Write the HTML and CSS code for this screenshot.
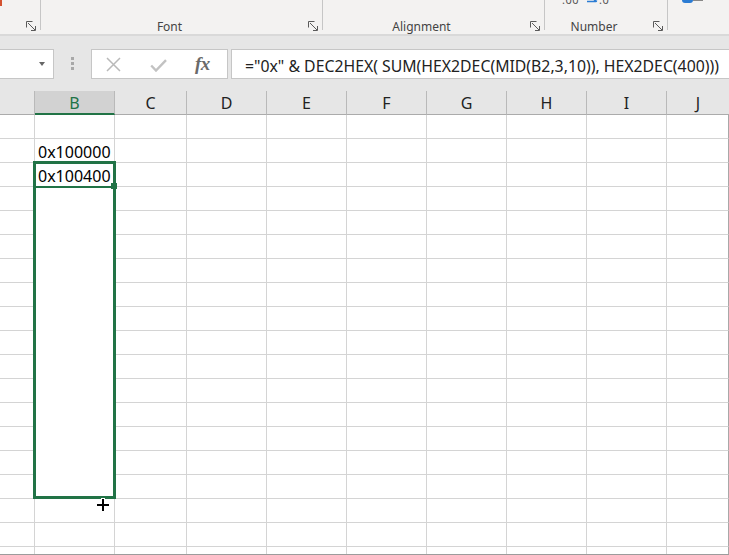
FILE: index.html
```html
<!DOCTYPE html>
<html>
<head>
<meta charset="utf-8">
<link rel="stylesheet" href="styles.css">
</head>
<body>
<div class="ribbon">
  <div class="group g0">
    <div class="gtop"><span class="orange"></span></div>
    <div class="gbot"><span class="label"></span>
      <svg class="launch" viewBox="0 0 10 10"><path d="M0.5 6.5V0.5H6.5M2 2L9 9M5 9.5H9.5V5" fill="none" stroke="#5a5a5a" stroke-width="1"/></svg>
    </div>
  </div>
  <div class="sep"></div>
  <div class="group g1">
    <div class="gtop"></div>
    <div class="gbot"><span class="label">Font</span>
      <svg class="launch" viewBox="0 0 10 10"><path d="M0.5 6.5V0.5H6.5M2 2L9 9M5 9.5H9.5V5" fill="none" stroke="#5a5a5a" stroke-width="1"/></svg>
    </div>
  </div>
  <div class="sep"></div>
  <div class="group g2">
    <div class="gtop"></div>
    <div class="gbot"><span class="label">Alignment</span>
      <svg class="launch" viewBox="0 0 10 10"><path d="M0.5 6.5V0.5H6.5M2 2L9 9M5 9.5H9.5V5" fill="none" stroke="#5a5a5a" stroke-width="1"/></svg>
    </div>
  </div>
  <div class="sep"></div>
  <div class="group g3">
    <div class="gtop numtop">
      <span class="dec">.00</span>
      <svg class="blarrow" viewBox="0 0 11 4"><path d="M0 1.5H9M7 0L10 1.5" fill="none" stroke="#2b7cd3" stroke-width="1.6"/></svg>
      <span class="dec">.0</span>
    </div>
    <div class="gbot"><span class="label">Number</span>
      <svg class="launch" viewBox="0 0 10 10"><path d="M0.5 6.5V0.5H6.5M2 2L9 9M5 9.5H9.5V5" fill="none" stroke="#5a5a5a" stroke-width="1"/></svg>
    </div>
  </div>
  <div class="sep"></div>
  <div class="group g4">
    <div class="gtop"><span class="blueblob"></span><span class="grayblob"></span></div>
  </div>
</div>

<div class="fbar">
  <div class="namebox"><span class="tri"></span></div>
  <div class="grip"><i></i><i></i><i></i></div>
  <div class="fbtns">
    <svg class="xic" viewBox="0 0 15 15"><path d="M1 1L14 14M14 1L1 14" fill="none" stroke="#b9b9b9" stroke-width="1.5"/></svg>
    <svg class="chk" viewBox="0 0 17 13"><path d="M1.2 6.5L6 11.5L16 1.2" fill="none" stroke="#c2c2c2" stroke-width="2.4"/></svg>
    <span class="fx">fx</span>
  </div>
  <div class="finput">="0x" &amp; DEC2HEX( SUM(HEX2DEC(MID(B2,3,10)), HEX2DEC(400)))</div>
</div>

<div class="hdr">
  <div class="h"></div><div class="h on">B</div><div class="h">C</div><div class="h">D</div><div class="h">E</div><div class="h">F</div><div class="h">G</div><div class="h">H</div><div class="h">I</div><div class="h last">J</div>
</div>

<div class="sheet">
  <div class="grid">
    <div class="c"></div><div class="c"></div><div class="c"></div><div class="c"></div><div class="c"></div><div class="c"></div><div class="c"></div><div class="c"></div><div class="c"></div><div class="c"></div>
    <div class="c"></div><div class="c">0x100000</div><div class="c"></div><div class="c"></div><div class="c"></div><div class="c"></div><div class="c"></div><div class="c"></div><div class="c"></div><div class="c"></div>
    <div class="c"></div><div class="c">0x100400</div><div class="c"></div><div class="c"></div><div class="c"></div><div class="c"></div><div class="c"></div><div class="c"></div><div class="c"></div><div class="c"></div>
    <div class="c"></div><div class="c in"></div><div class="c"></div><div class="c"></div><div class="c"></div><div class="c"></div><div class="c"></div><div class="c"></div><div class="c"></div><div class="c"></div>
    <div class="c"></div><div class="c in"></div><div class="c"></div><div class="c"></div><div class="c"></div><div class="c"></div><div class="c"></div><div class="c"></div><div class="c"></div><div class="c"></div>
    <div class="c"></div><div class="c in"></div><div class="c"></div><div class="c"></div><div class="c"></div><div class="c"></div><div class="c"></div><div class="c"></div><div class="c"></div><div class="c"></div>
    <div class="c"></div><div class="c in"></div><div class="c"></div><div class="c"></div><div class="c"></div><div class="c"></div><div class="c"></div><div class="c"></div><div class="c"></div><div class="c"></div>
    <div class="c"></div><div class="c in"></div><div class="c"></div><div class="c"></div><div class="c"></div><div class="c"></div><div class="c"></div><div class="c"></div><div class="c"></div><div class="c"></div>
    <div class="c"></div><div class="c in"></div><div class="c"></div><div class="c"></div><div class="c"></div><div class="c"></div><div class="c"></div><div class="c"></div><div class="c"></div><div class="c"></div>
    <div class="c"></div><div class="c in"></div><div class="c"></div><div class="c"></div><div class="c"></div><div class="c"></div><div class="c"></div><div class="c"></div><div class="c"></div><div class="c"></div>
    <div class="c"></div><div class="c in"></div><div class="c"></div><div class="c"></div><div class="c"></div><div class="c"></div><div class="c"></div><div class="c"></div><div class="c"></div><div class="c"></div>
    <div class="c"></div><div class="c in"></div><div class="c"></div><div class="c"></div><div class="c"></div><div class="c"></div><div class="c"></div><div class="c"></div><div class="c"></div><div class="c"></div>
    <div class="c"></div><div class="c in"></div><div class="c"></div><div class="c"></div><div class="c"></div><div class="c"></div><div class="c"></div><div class="c"></div><div class="c"></div><div class="c"></div>
    <div class="c"></div><div class="c in"></div><div class="c"></div><div class="c"></div><div class="c"></div><div class="c"></div><div class="c"></div><div class="c"></div><div class="c"></div><div class="c"></div>
    <div class="c"></div><div class="c in"></div><div class="c"></div><div class="c"></div><div class="c"></div><div class="c"></div><div class="c"></div><div class="c"></div><div class="c"></div><div class="c"></div>
    <div class="c"></div><div class="c"></div><div class="c"></div><div class="c"></div><div class="c"></div><div class="c"></div><div class="c"></div><div class="c"></div><div class="c"></div><div class="c"></div>
    <div class="c"></div><div class="c"></div><div class="c"></div><div class="c"></div><div class="c"></div><div class="c"></div><div class="c"></div><div class="c"></div><div class="c"></div><div class="c"></div>
    <div class="c"></div><div class="c"></div><div class="c"></div><div class="c"></div><div class="c"></div><div class="c"></div><div class="c"></div><div class="c"></div><div class="c"></div><div class="c"></div>
    <div class="c"></div><div class="c"></div><div class="c"></div><div class="c"></div><div class="c"></div><div class="c"></div><div class="c"></div><div class="c"></div><div class="c"></div><div class="c"></div>
  </div>
  <div class="range"></div>
  <div class="actline"></div>
  <div class="fillhandle"></div>
  <svg class="cursor" viewBox="0 0 16 16"><path d="M8 1V15M1 8H15" stroke="#fff" stroke-width="4"/><path d="M8 2V14M2 8H14" stroke="#000" stroke-width="2"/></svg>
</div>
</body>
</html>
```

FILE: styles.css
```css
* { box-sizing: border-box; }
html, body { margin: 0; padding: 0; }
body {
  width: 729px;
  height: 555px;
  overflow: hidden;
  background: #e6e6e6;
  font-family: "Noto Sans", "Open Sans", sans-serif;
  color: #222;
}

/* Ribbon */
.ribbon {
  display: flex;
  height: 36px;
  background: #f3f2f1;
  border-bottom: 2px solid #d9d9d9;
}
.group {
  display: flex;
  flex-direction: column;
  justify-content: space-between;
  height: 34px;
  overflow: hidden;
  flex: none;
}
.g0 { width: 40px; }
.g1 { width: 281px; }
.g2 { width: 221px; }
.g3 { width: 122px; }
.g4 { flex: 1; }
.sep { width: 1px; height: 30px; background: #c6c6c6; flex: none; }
.gtop { height: 8px; display: flex; align-items: flex-start; }
.gbot { display: flex; align-items: flex-end; }
.label {
  flex: 1;
  text-align: center;
  padding-right: 10px;
  font-size: 12px;
  line-height: 14px;
  color: #444;
  white-space: nowrap;
}
.launch { width: 10px; height: 10px; margin: 0 4px 3px 0; flex: none; display: block; }
.orange { width: 2px; height: 6px; background: #d35230; display: block; }
.numtop { padding-left: 17px; }
.dec {
  font-size: 11px;
  line-height: 10px;
  margin-top: -5px;
  color: #555;
  letter-spacing: 0.5px;
}
.blarrow { width: 11px; height: 4px; margin-left: 8px; margin-right: 1px; display: block; }
.blueblob { width: 11px; height: 3px; margin-left: 14px; background: #2b7cd3; border-radius: 0 0 3px 3px; display: block; }
.grayblob { width: 10px; height: 1px; background: #888; display: block; margin-top: 0; }

/* Formula bar */
.fbar {
  display: flex;
  align-items: flex-start;
  height: 55px;
  padding-top: 13px;
}
.namebox {
  margin-left: -1px;
  width: 55px;
  height: 30px;
  background: #fff;
  border: 1px solid #c6c6c6;
  display: flex;
  align-items: center;
  justify-content: flex-end;
  padding-right: 8px;
  flex: none;
}
.tri {
  width: 0; height: 0;
  border-left: 3.5px solid transparent;
  border-right: 3.5px solid transparent;
  border-top: 4px solid #666;
}
.grip {
  display: flex;
  flex-direction: column;
  gap: 2px;
  margin: 8px 0 0 17px;
  flex: none;
}
.grip i { display: block; width: 3px; height: 3px; background: #a8a8a8; }
.fbtns {
  margin-left: 17px;
  width: 137px;
  height: 30px;
  background: #fff;
  border: 1px solid #c6c6c6;
  display: flex;
  align-items: center;
  padding-left: 14px;
  flex: none;
}
.xic { width: 15px; height: 15px; display: block; }
.chk { width: 17px; height: 13px; display: block; margin-left: 29px; margin-top: 3px; }
.fx {
  margin-left: 28px;
  font-family: "Liberation Serif", "DejaVu Serif", serif;
  font-style: italic;
  font-weight: bold;
  font-size: 19px;
  line-height: 20px;
  color: #6a6a6a;
  letter-spacing: -0.5px;
}
.finput {
  flex: 1;
  margin-left: 3px;
  height: 30px;
  background: #fff;
  border: 1px solid #c6c6c6;
  border-right: none;
  padding: 3px 0 0 13px;
  font-size: 15.8px;
  line-height: 26px;
  color: #222;
  white-space: nowrap;
  overflow: hidden;
}

/* Column headers */
.hdr, .grid {
  display: grid;
  grid-template-columns: 35px 80px 72px 80px 80px 80px 80px 80px 80px 62px;
}
.hdr { height: 24px; }
.h {
  border-right: 1px solid #b9b9b9;
  border-bottom: 1px solid #ababab;
  text-align: center;
  font-size: 16px;
  line-height: 23px;
  padding-top: 1px;
  color: #222;
  background: #e6e6e6;
  overflow: hidden;
}
.h.on { background: #d2d2d2; color: #217346; border-bottom: 2px solid #217346; }
.h.last { border-right: none; }

/* Sheet */
.sheet {
  position: relative;
  height: 440px;
  background: #fff;
  border-bottom: 1px solid #9c9c9c;
  overflow: hidden;
}
.grid { grid-auto-rows: 24px; }
.c {
  border-right: 1px solid #d4d4d4;
  border-bottom: 1px solid #d4d4d4;
  font-size: 16px;
  line-height: 23px;
  padding: 2px 0 0 3px;
  color: #000;
  white-space: nowrap;
  overflow: hidden;
}
.c:nth-child(10n) { border-right-color: #a8a8a8; }
.c.in { border-bottom-color: #fff; }
.range {
  position: absolute;
  left: 33px;
  top: 46px;
  width: 83px;
  height: 338px;
  border: 3px solid #217346;
}
.actline {
  position: absolute;
  left: 36px;
  top: 71px;
  width: 76px;
  height: 2px;
  background: #217346;
}
.fillhandle {
  position: absolute;
  left: 111px;
  top: 68px;
  width: 6px;
  height: 6px;
  background: #217346;
}
.cursor {
  position: absolute;
  left: 95px;
  top: 382px;
  width: 16px;
  height: 16px;
}
```
